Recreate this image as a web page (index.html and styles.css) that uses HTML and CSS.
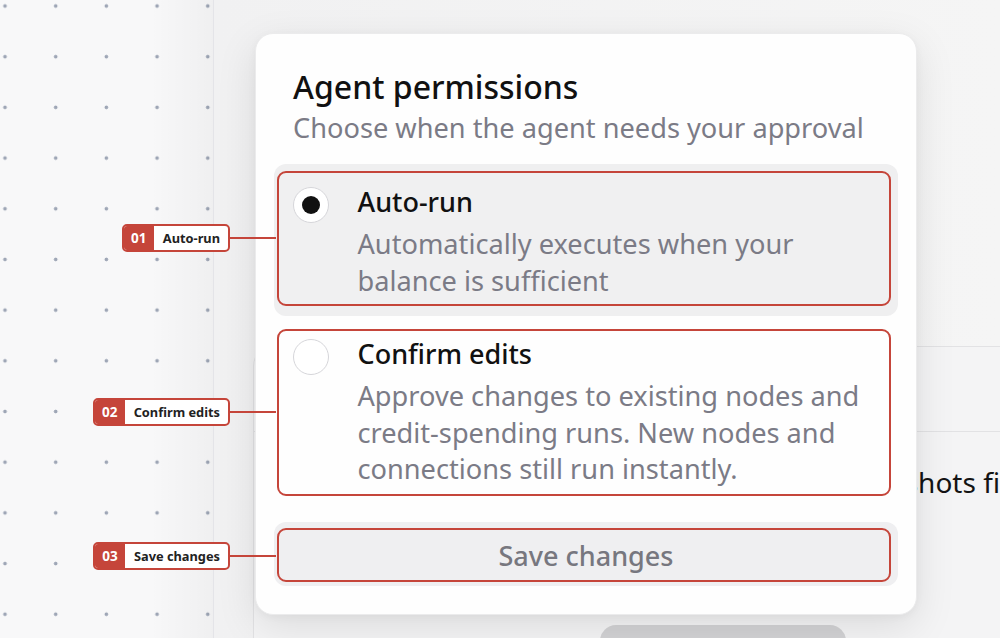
FILE: index.html
```html
<!DOCTYPE html>
<html lang="en">
<head>
<meta charset="utf-8">
<title>Agent permissions</title>
<link rel="stylesheet" href="styles.css">
</head>
<body>
<div class="app">
  <div class="canvas"></div>
  <div class="panel">
    <div class="sheet">
      <div class="sheet-row"></div>
      <div class="sheet-text">Screenshots first</div>
      <div class="pill"></div>
    </div>
  </div>
</div>

<div class="modal">
  <div class="modal-head">
    <h1 class="modal-title">Agent permissions</h1>
    <p class="modal-sub">Choose when the agent needs your approval</p>
  </div>

  <div class="option option-selected">
    <div class="option-box option-box-1">
      <span class="radio radio-on"></span>
      <div class="option-text">
        <div class="option-title">Auto-run</div>
        <div class="option-desc">Automatically executes when your<br>balance is sufficient</div>
      </div>
    </div>
  </div>

  <div class="option option-plain">
    <div class="option-box option-box-2">
      <span class="radio"></span>
      <div class="option-text">
        <div class="option-title">Confirm edits</div>
        <div class="option-desc option-desc-2">Approve changes to existing nodes and<br>credit-spending runs. New nodes and<br>connections still run instantly.</div>
      </div>
    </div>
  </div>

  <div class="save">
    <div class="save-box">Save changes</div>
  </div>
</div>

<div class="note note-1"><span class="note-label"><span class="note-num">01</span><span class="note-name">Auto-run</span></span><span class="note-line"></span></div>
<div class="note note-2"><span class="note-label"><span class="note-num">02</span><span class="note-name">Confirm edits</span></span><span class="note-line"></span></div>
<div class="note note-3"><span class="note-label"><span class="note-num">03</span><span class="note-name">Save changes</span></span><span class="note-line"></span></div>
</body>
</html>
```

FILE: styles.css
```css
* { box-sizing: border-box; }

html, body {
  margin: 0;
  padding: 0;
  width: 1000px;
  height: 638px;
  overflow: hidden;
  font-family: "Noto Sans", "Open Sans", sans-serif;
  background: #f3f3f4;
}

.app {
  display: flex;
  width: 1000px;
  height: 638px;
}

.canvas {
  width: 214px;
  flex: none;
  border-right: 1px solid #e4e4e8;
  background-color: #f8f8f9;
  background-image:
    linear-gradient(to right, rgba(0,0,0,0) 150px, rgba(0,0,0,0.035) 213px),
    radial-gradient(circle, #9ea6b6 1.6px, rgba(158,166,182,0) 2.2px);
  background-size: 100% 100%, 50.7px 50.7px;
  background-position: 0 0, -20.35px -19.35px;
}

.panel {
  flex: 1;
  display: flex;
  flex-direction: column;
  padding: 346px 0 0 39px;
  background: linear-gradient(to right, #f1f1f2, #f5f5f5);
  overflow: hidden;
}

.sheet {
  flex: 1;
  border: 1px solid #e2e2e4;
  border-right: none;
  border-bottom: none;
  border-radius: 20px 0 0 0;
  background: #f4f4f5;
}

.sheet-row {
  height: 85px;
  border-bottom: 1px solid #e2e2e4;
}

.sheet-text {
  margin: 32px 0 0 562px;
  font-size: 28px;
  line-height: 36px;
  color: #141414;
  white-space: nowrap;
}

.pill {
  margin: 125px 0 0 346px;
  width: 246px;
  height: 40px;
  border-radius: 16px;
  background: #d2d2d4;
}

/* Modal */
.modal {
  position: absolute;
  left: 255px;
  top: 33px;
  width: 662px;
  height: 582px;
  padding: 35px 18px 28px 18px;
  background: #fefefe;
  border: 1px solid #ebebec;
  border-radius: 18px;
  box-shadow: 0 12px 40px rgba(0,0,0,0.10), 0 2px 8px rgba(0,0,0,0.04);
}

.modal-head {
  padding-left: 19px;
  margin-bottom: 19px;
}

.modal-title {
  margin: 0;
  font-size: 32px;
  line-height: 36px;
  font-weight: 500;
  color: #111;
}

.modal-sub {
  margin: 6px 0 0;
  font-size: 27.2px;
  line-height: 34px;
  color: #7b7b86;
  white-space: nowrap;
}

.option {
  border-radius: 12px;
  margin-bottom: 6px;
}

.option-selected {
  padding: 7px 7px 10px 3px;
  background: #efeff0;
}

.option-plain {
  padding: 7px 7px 10px 3px;
}

.option-box {
  display: flex;
  align-items: flex-start;
  gap: 29px;
  border: 2.5px solid #c5453a;
  border-radius: 9px;
  padding-left: 13.5px;
}

.option-box-1 {
  padding-top: 12px;
  padding-bottom: 4.5px;
  background: #f0f0f1;
}

.option-box-2 {
  padding-top: 6px;
  padding-bottom: 6.5px;
  background: #fefefe;
}

.radio {
  flex: none;
  width: 36px;
  height: 36px;
  margin-top: 2px;
  border-radius: 50%;
  background: #fff;
  border: 1.5px solid #d6d6da;
  display: flex;
  align-items: center;
  justify-content: center;
}

.radio-on::after {
  content: "";
  width: 18px;
  height: 18px;
  border-radius: 50%;
  background: #111;
}

.option-title {
  font-size: 27px;
  line-height: 34px;
  font-weight: 500;
  color: #111;
}

.option-desc {
  margin-top: 7px;
  font-size: 27.2px;
  line-height: 36.5px;
  color: #7b7b86;
  white-space: nowrap;
}

.option-desc-2 {
  margin-top: 7.5px;
}

.save {
  margin-top: 16px;
  padding: 6px 7px 4px 3px;
  border-radius: 12px;
  background: #efeff1;
}

.save-box {
  height: 54px;
  border: 2.5px solid #c5453a;
  border-radius: 9px;
  display: flex;
  align-items: center;
  justify-content: center;
  padding-left: 4px;
  font-size: 27px;
  font-weight: 500;
  color: #77777f;
}

/* Annotations */
.note {
  position: absolute;
  right: 724px;
  display: flex;
  align-items: center;
}

.note-1 { top: 224px; }
.note-2 { top: 398px; }
.note-3 { top: 542px; }

.note-label {
  display: flex;
  align-items: stretch;
  height: 28px;
  border: 2px solid #c5453a;
  border-radius: 5px;
  background: #fff;
  overflow: hidden;
}

.note-num {
  display: flex;
  align-items: center;
  justify-content: center;
  width: 30px;
  background: #c5453a;
  color: #fff;
  font-size: 13.5px;
  font-weight: 700;
}

.note-name {
  display: flex;
  align-items: center;
  padding: 0 8px 0 9px;
  font-size: 12.8px;
  font-weight: 700;
  color: #222;
  white-space: nowrap;
}

.note-line {
  width: 46px;
  height: 2.5px;
  background: #c5453a;
}
```
